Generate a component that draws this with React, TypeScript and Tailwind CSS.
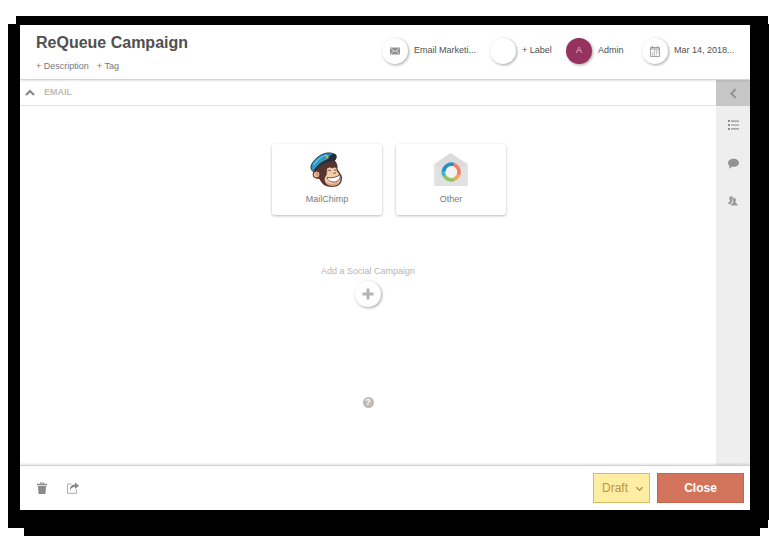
import type { ReactNode } from "react";

function MailIcon() {
  return (
    <svg width="10" height="8" viewBox="0 0 10 8" aria-hidden="true">
      <rect width="10" height="7" y="0.5" fill="#8f8f8f" />
      <path d="M0.5 1.2 5 4.8 9.5 1.2M0.5 7 3.6 4M9.5 7 6.4 4" fill="none" stroke="#fff" strokeWidth="0.7" />
    </svg>
  );
}

function CalendarIcon() {
  return (
    <svg width="10" height="11" viewBox="0 0 10 11" fill="none" stroke="#8c8c8c" aria-hidden="true">
      <path d="M0.5 1.5h9v9h-9z" strokeWidth="0.8" />
      <path d="M0.5 3h9" strokeWidth="1" />
      <path d="M2.5 0v2M7.5 0v2" strokeWidth="0.9" />
      <path d="M4 5h4.5M2 7h6.5M2 9h4.5" strokeWidth="1.1" strokeDasharray="1.2 0.8" />
    </svg>
  );
}

function Chevron({ d, size, color, width }: { d: string; size: number; color: string; width: number }) {
  return (
    <svg width={size} height={size} viewBox="0 0 10 10" fill="none" stroke={color} strokeWidth={width} aria-hidden="true">
      <path d={d} />
    </svg>
  );
}

function ListIcon() {
  return (
    <svg width="11" height="10" viewBox="0 0 11 10" fill="#8f8f8f" aria-hidden="true">
      <path d="M0 0h2v2H0zM3 .5h8v1.200H3zM0 4h2v2H0zM3 4.400h8v1.200H3zM0 8h2v2H0zM3 8.300h8v1.200H3z" />
    </svg>
  );
}

function CommentIcon() {
  return (
    <svg width="11" height="11" viewBox="0 0 10 10" fill="#939393" aria-hidden="true">
      <path d="M5.2.6C8 .6 10 2.1 10 4.3S8 8 5.2 8c-.6 0-1 0-1.5-.2C2.900 8.800 1.800 9.400.6 9.600c.7-.8.900-1.500.8-2.500C.5 6.400 0 5.400 0 4.300 0 2.100 2.400.6 5.200.6z" />
    </svg>
  );
}

function PeopleIcon() {
  return (
    <svg width="10" height="10" viewBox="0 0 10 10" fill="#999" aria-hidden="true">
      <path d="M3.200.2c1.500 0 2 1 1.900 2.300C5 3.700 4.500 4 4.500 4.800L3.300 6.500 3 8H.3c0-1.500.2-2 1.700-2.700C2.600 4.700 1.500 3.800 1.300 2.400 1.200 1 1.800.2 3.200.2z" />
      <path d="M6.300 1.800c1.500 0 2.100 1 1.900 2.300-.1.900-.6 1.300-.6 2.100.2.900 2.200.9 2.400 3.500H2.600c.1-2.500 2.100-2.600 2.400-3.500 0-.8-.6-1.200-.7-2.100-.2-1.300.5-2.300 2-2.300z" stroke="#eee" strokeWidth="0.5" />
    </svg>
  );
}

function TrashIcon() {
  return (
    <svg width="10" height="12" viewBox="0 0 10 12" fill="#8b8b8b" aria-hidden="true">
      <path d="M0 1.800h3V.5h4v1.300h3v1.400H0zM3.900 1.200v.6h2.200v-.6zM.8 4h8.400l-.8 8H1.600z" />
    </svg>
  );
}

function ShareIcon() {
  return (
    <svg width="12" height="12" viewBox="0 0 12 12" aria-hidden="true">
      <path d="M4.500 2H.6v9.300h9V7.500" fill="none" stroke="#aaa" strokeWidth="1" />
      <path d="M8 .5 12 3.800 8 7V5.100C5.500 5 4.200 6 3.200 8.500 2.500 4.800 4.300 2.500 8 2.400z" fill="#888" />
    </svg>
  );
}

function MailChimpLogo() {
  return (
    <svg width="36" height="36" viewBox="0 0 36 36" aria-hidden="true">
      <path d="M6 17C12 12 18 8 25 8c3 2 4 6 3.500 9 1 3 4.500 5 4.500 9 0 6-4 9-10 9-6.500 0-10.500-3-12.500-8C4 27 2 21 6 17z" fill="#573430" />
      <circle cx="7.500" cy="22.500" r="3.500" fill="#e9b591" stroke="#573430" strokeWidth="1" />
      <path d="M6.500 21c2 0 2.500 1 2 2.500" fill="none" stroke="#a76e52" strokeWidth=".8" />
      <path d="M18 17c1.500-2 4-2 5.500-.5C25 15 27 15 27.500 17c.2 2 1 3.500 2.500 5 2.500 3.500 2 8-1.500 10.500-3.500 2.200-8.500 1.500-11-.8-2-2-2.500-5-1-7.200 2-1.500 1-5 1.500-7.500z" fill="#f3cda7" />
      <path d="M16.500 29c2.500 3.500 8.500 4 13 1-2 4.500-10.500 5-13-1z" fill="#d49b76" />
      <path d="M18 25.500c4.500.8 9.500 0 13-2.800 1 4.500-2 7-5.500 7.300-4 .2-7-1.500-7.500-4.500z" fill="#fff" stroke="#573430" strokeWidth=".8" />
      <path d="M18.500 19c1.200-1 2.500-1 3.500 0M25 18.500c.8-.9 1.800-.9 2.500 0M24.500 21.500c1-.6 2-.8 2.500-.4" fill="none" stroke="#5b392d" strokeWidth=".9" />
      <path d="M2 14C4 8 11 2 18 1c3-.4 6 .3 8 1.500-2 4-2 5.500-4 6.500-7 1-12 5-17 11-2-1-3.500-3-3-6z" fill="#2593c5" stroke="#213040" strokeWidth=".9" />
      <path d="M4 12C8 7 13 3 18 2c-3 3-9 6-13 12z" fill="#55b9dd" />
      <path d="M5 17.500C9 12 14 8 21 6.500L23 9C16 10 11 14 5.500 20z" fill="#263846" />
      <path d="M19 6C22 2 25 1 27 2.500c1.500 2 .5 5-1.500 6.500-3-.5-6 .3-9 1.500z" fill="#252d37" />
      <path d="M16 3c1.500 0 3.500.7 3.500 2.400-1.500.8-3.500 0-3.500-2.400z" fill="#d7b45b" />
      <path d="M4.500 17C9 11 14 7.500 20 6" fill="none" stroke="#d0af56" strokeWidth=".5" />
    </svg>
  );
}

function OtherLogo() {
  return (
    <svg width="34" height="36" viewBox="0 0 34 36" fill="none" aria-hidden="true">
      <path d="M0.500 12 16.500 1 33.500 12v22H.5z" fill="#dcdcdc" />
      <path d="m.5 12 16.500 11 16.500-11v22H.5z" fill="#e1e1e1" />
      <circle cx="17" cy="20" r="8" fill="#f3f3f3" />
      <g strokeWidth="3.600">
        <path d="M9.500 20A8 8 0 0 1 20 12.600" stroke="#2d8fc0" />
        <path d="M20 12.600A8 8 0 0 1 24.500 23" stroke="#f0805c" />
        <path d="M24.500 23A8 8 0 0 1 20 27.400" stroke="#f4a84e" />
        <path d="M20 27.400A8 8 0 0 1 10.500 24" stroke="#8cc665" />
        <path d="M10.500 24A8 8 0 0 1 9.200 19" stroke="#42b3c5" />
      </g>
    </svg>
  );
}

const circle =
  "flex size-[26px] shrink-0 items-center justify-center rounded-full shadow-[1px_1px_3px_rgba(0,0,0,0.35)]";

function HeaderItem({ icon, label, width, fill }: { icon?: ReactNode; label: string; width: string; fill: string }) {
  return (
    <button type="button" className={`flex items-center gap-[6px] whitespace-nowrap text-[9px] text-[#505050] ${width}`}>
      <span className={`${circle} ${fill}`}>{icon}</span>
      <span>{label}</span>
    </button>
  );
}

function ChannelCard({ logo, label }: { logo: ReactNode; label: string }) {
  return (
    <button
      type="button"
      className="flex h-[71px] w-[110px] flex-col items-center gap-[5px] rounded-[3px] bg-white pt-2 text-[9px] leading-3 text-[#7b7b7b] shadow-[0_1px_3px_rgba(0,0,0,0.28)]"
    >
      {logo}
      {label}
    </button>
  );
}

export default function App() {
  return (
    <div className="flex min-h-screen overflow-hidden bg-white pt-6 pr-[9px] pb-[15px] pl-2 font-['Liberation_Sans',Arial,sans-serif]">
      <div className="flex flex-1 bg-black pt-px pr-[10px] pb-[18px] pl-3 shadow-[8px_-8px_0_0_#000,8px_0_0_0_#000,8px_16px_0_-8px_#000,17px_0_0_-8px_#000,17px_-8px_0_-8px_#000]">
        <div className="flex min-w-0 flex-1 flex-col bg-white">
          <header className="relative flex h-[55px] justify-between border-b border-[#d5d5d5] pr-[18px] pl-4 shadow-[0_1px_2px_rgba(0,0,0,0.1)]">
            <div className="pt-2">
              <h1 className="text-[16px] leading-5 font-bold text-[#505050]">ReQueue Campaign</h1>
              <div className="mt-[7px] flex gap-2 text-[9px] leading-3 text-[#777]">
                <button type="button">+ Description</button>
                <button type="button">+ Tag</button>
              </div>
            </div>
            <div className="flex gap-4 pb-0.5">
              <HeaderItem width="w-[92px]" fill="bg-white" icon={<MailIcon />} label="Email Marketi..." />
              <HeaderItem width="w-[60px]" fill="bg-white" label="+ Label" />
              <HeaderItem width="w-[60px]" fill="bg-[#96325f]" icon={<span className="text-[#e3bdcf]">A</span>} label="Admin" />
              <HeaderItem width="w-[90px]" fill="bg-white" icon={<CalendarIcon />} label="Mar 14, 2018..." />
            </div>
          </header>

          <div className="flex flex-1">
            <main className="flex flex-1 flex-col items-center">
              <button
                type="button"
                className="flex h-[26px] w-full items-center gap-[9px] border-b border-[#e2e2e2] pl-[5px] text-[9px] font-bold text-[#bdbdbd]"
              >
                <Chevron d="M1 7 5 3l4 4" size={10} color="#858585" width={2} />
                EMAIL
              </button>
              <div className="mt-[38px] flex gap-[14px] pl-[42px]">
                <ChannelCard logo={<MailChimpLogo />} label="MailChimp" />
                <ChannelCard logo={<OtherLogo />} label="Other" />
              </div>
              <p className="mt-[50px] text-[9px] leading-3 text-[#b5b5b5]">Add a Social Campaign</p>
              <button type="button" aria-label="Add a social campaign" className={`${circle} mt-1 bg-white`}>
                <svg width="12" height="12" viewBox="0 0 12 12" aria-hidden="true">
                  <path d="M6 .5v11M.5 6h11" stroke="#b3b3b3" strokeWidth="2.800" />
                </svg>
              </button>
              <button
                type="button"
                aria-label="Help"
                className="mt-[90px] mb-14 flex size-[11px] items-center justify-center rounded-full bg-[#bcbcbc] text-[9px] leading-none font-bold text-white"
              >
                ?
              </button>
            </main>
            <nav className="flex w-[34px] flex-col bg-[#eee]">
              <button type="button" aria-label="Collapse panel" className="flex h-[26px] items-center justify-center bg-[#c6c6c6]">
                <Chevron d="M7 1 3 5l4 4" size={11} color="#979797" width={2} />
              </button>
              <button type="button" aria-label="Tasks" className="flex h-[38px] items-center justify-center">
                <ListIcon />
              </button>
              <button type="button" aria-label="Comments" className="flex h-[38px] items-center justify-center">
                <CommentIcon />
              </button>
              <button type="button" aria-label="People" className="flex h-[38px] items-center justify-center">
                <PeopleIcon />
              </button>
            </nav>
          </div>

          <footer className="flex h-[45px] items-center justify-between border-t border-[#d0d0d0] pr-[6px] pl-[17px] shadow-[0_-1px_2px_rgba(0,0,0,0.12)]">
            <div className="flex items-center gap-5">
              <button type="button" aria-label="Delete">
                <TrashIcon />
              </button>
              <button type="button" aria-label="Share">
                <ShareIcon />
              </button>
            </div>
            <div className="flex gap-[7px]">
              <div className="relative">
                <select
                  aria-label="Status"
                  className="h-[30px] w-[57px] appearance-none border border-[#d9bd62] bg-[#ffeda3] pl-2 text-[12px] text-[#b99645]"
                >
                  <option>Draft</option>
                </select>
                <span className="pointer-events-none absolute inset-y-0 right-[6px] flex items-center">
                  <Chevron d="M1.500 3.500 5 7l3.500-3.500" size={9} color="#b99645" width={1.6} />
                </span>
              </div>
              <button type="button" className="h-[30px] w-[87px] border border-[#c9634a] bg-[#d2735b] text-[12px] font-bold text-white">
                Close
              </button>
            </div>
          </footer>
        </div>
      </div>
    </div>
  );
}
